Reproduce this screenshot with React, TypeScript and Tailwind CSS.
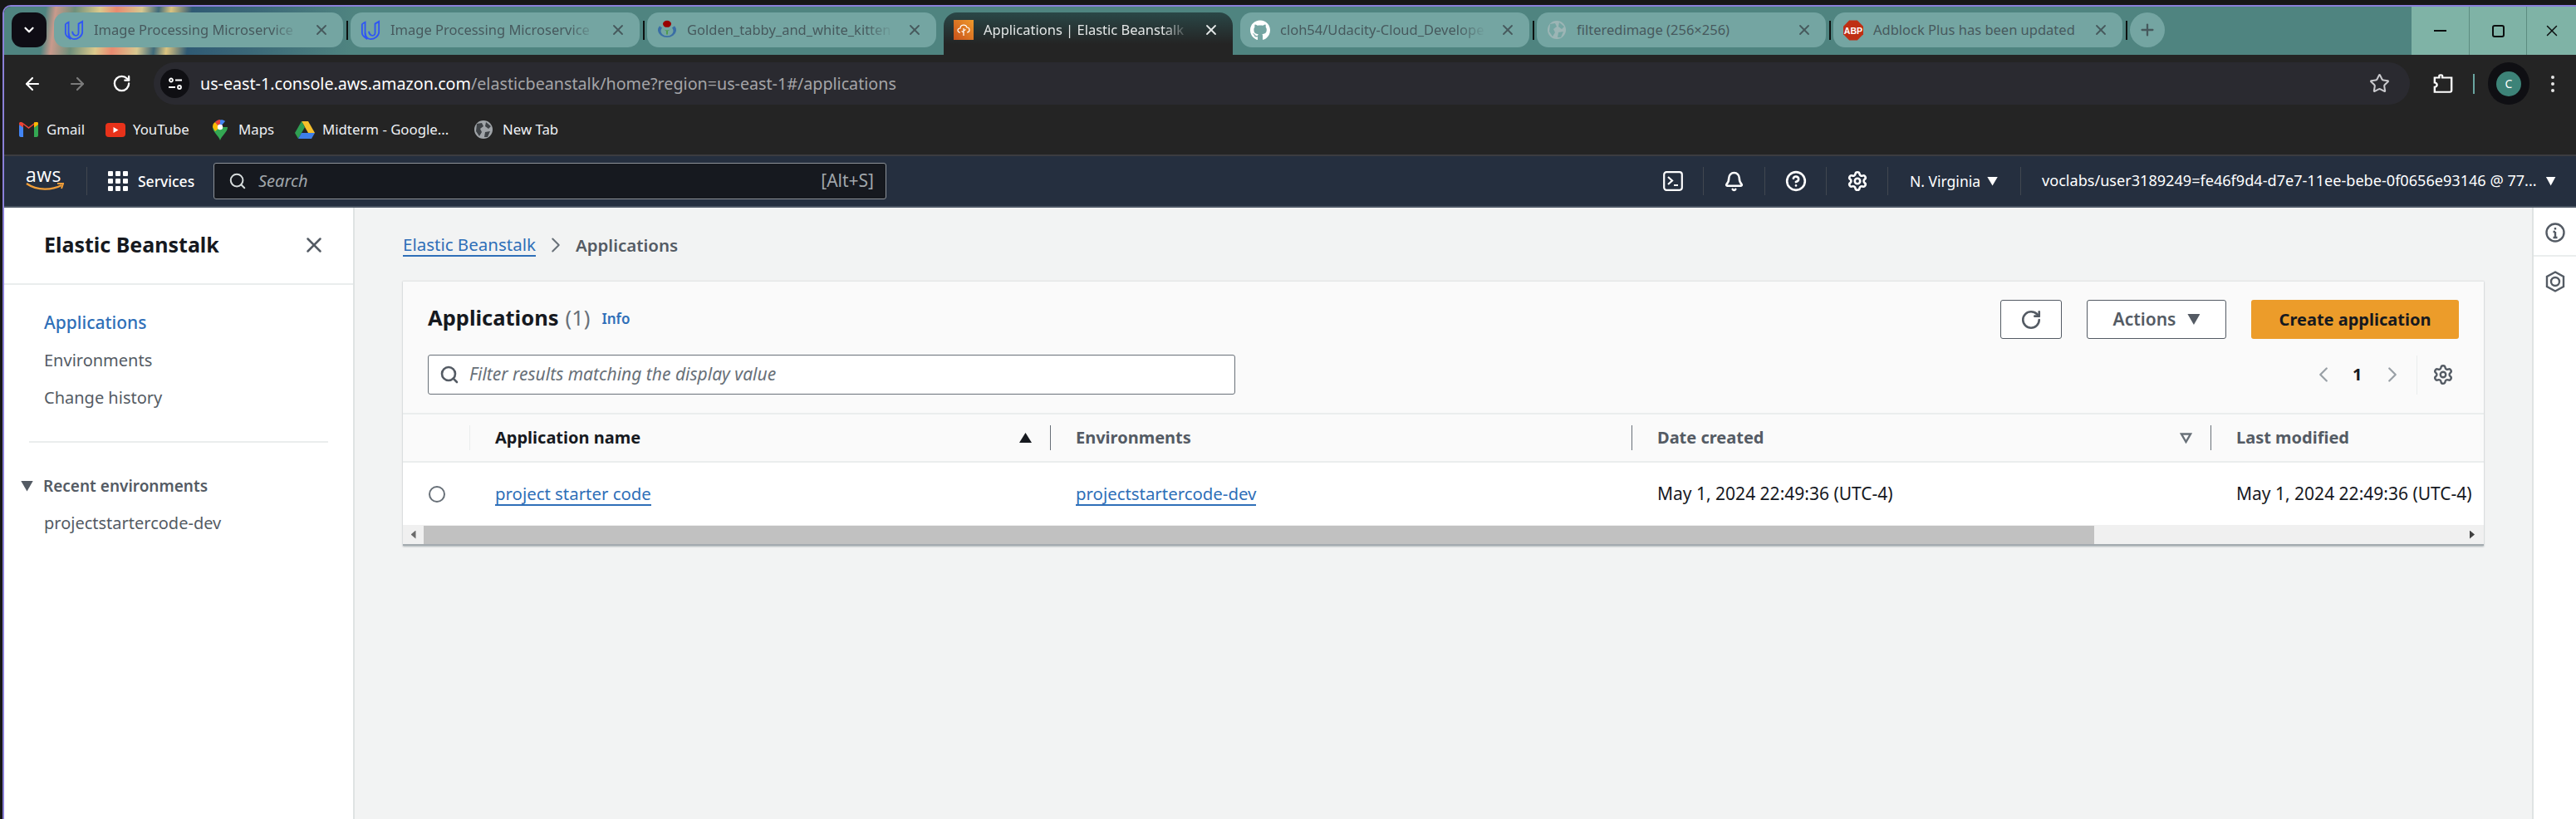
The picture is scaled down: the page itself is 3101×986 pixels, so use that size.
import {
  ArrowLeft,
  ArrowRight,
  Bell,
  ChevronDown,
  ChevronLeft,
  ChevronRight,
  CircleHelp,
  Plus,
  RotateCw,
  Search,
  Settings,
  Star,
  X,
} from "lucide-react";
import type { ReactNode } from "react";
import { FaGithub } from "react-icons/fa";

const UdacityIcon = () => (
  <svg width="26" height="26" viewBox="0 0 26 26" fill="none" stroke="#2f55f5" strokeWidth="2">
    <path d="M2 6 L2 17 C2 21 6 23 9 25 L9 25 C6 22 6 20 6 17 L6 3 C4 4 2 5 2 6Z" />
    <path d="M6 17 C6 21 9 25 13 25 C18 25 24 21 24 16 L24 2 L19 5 L19 17 C19 20 16 21 14 20 C11 19 11 17 11 15" />
  </svg>
);

const WikiIcon = () => (
  <svg width="24" height="24" viewBox="0 0 24 30" preserveAspectRatio="none">
    <circle cx="12" cy="6" r="5" fill="#990000" />
    <path d="M3 9 A11 11 0 1 0 21 9 L18 12 A7.5 7.5 0 1 1 6 12Z" fill="#3a6ea5" />
    <path d="M7 13 A6 6 0 0 0 17 13 L13 17 L13 22 L11 22 L11 17Z" fill="#4f9a50" />
  </svg>
);

const BeanstalkIcon = () => (
  <div className="w-6 h-6 bg-[linear-gradient(45deg,#c8511b,#ef9a2c)] flex items-center justify-center">
    <svg width="18" height="18" viewBox="0 0 18 18" fill="none" stroke="#fff" strokeWidth="1.2">
      <path d="M5 12 C1 12 1 7 5 7 C5 2 12 2 13 6 C17 6 17 12 13 12" />
      <path d="M9 16 L9 7 M9 10 L11.5 8.5 M9 12 L6.5 10.5" />
    </svg>
  </div>
);

const GlobeIcon = ({ bg, fg, size = 24 }: { bg: string; fg: string; size?: number }) => (
  <svg width={size} height={size} viewBox="0 0 24 24">
    <circle cx="12" cy="12" r="11" fill={bg} />
    <path d="M4 5 L10 4 L12 8 L8 11 L10 15 L7 20 L3 14Z M15 3 L21 8 L18 11 L14 8Z M14 15 L20 14 L17 21 L13 21Z" fill={fg} />
  </svg>
);

const AbpIcon = () => (
  <svg width="25" height="25" viewBox="0 0 25 25">
    <polygon points="7.5,0 17.5,0 25,7.5 25,17.5 17.5,25 7.5,25 0,17.5 0,7.5" fill="#bf2f14" />
    <text x="12.5" y="17" textAnchor="middle" fill="#fff" fontSize="11" fontWeight="700" fontFamily="Liberation Sans">
      ABP
    </text>
  </svg>
);

const GmailIcon = () => (
  <svg width="23" height="18" viewBox="0 0 23 18">
    <path d="M0 3 L5 6 L5 18 L2 18 C1 18 0 17 0 16Z" fill="#4285f4" />
    <path d="M23 3 L18 6 L18 18 L21 18 C22 18 23 17 23 16Z" fill="#34a853" />
    <path d="M0 2 C0 0 2 -1 4 0.5 L11.5 6 L19 0.5 C21 -1 23 0 23 2 L23 3 L18 6.5 L18 3 L11.5 8 L5 3 L5 6.5 L0 3Z" fill="#ea4335" />
    <path d="M18 0 L18 6.5 L23 3 L23 2 C23 0 21 -1 19 0.5Z" fill="#fbbc04" />
  </svg>
);

const YoutubeIcon = () => (
  <svg width="24" height="17" viewBox="0 0 24 17">
    <rect width="24" height="17" rx="4" fill="#e8321a" />
    <polygon points="9.5,5 9.5,12 15.5,8.5" fill="#fff" />
  </svg>
);

const MapsIcon = () => (
  <svg width="18" height="25" viewBox="0 0 18 25">
    <path d="M9 25 C7 19 0 15 0 9 L9 9Z" fill="#34a853" />
    <path d="M9 25 C11 19 18 15 18 9 L9 9Z" fill="#34a853" />
    <path d="M0 9 C0 6 1 4 3 3 L9 9 L3 14Z" fill="#fbbc04" />
    <path d="M3 3 C5 0 13 -1 15 2 L9 9Z" fill="#4285f4" />
    <path d="M3 3 C5 1 7 0 9 0 L9 5 L6 7Z" fill="#ea4335" />
    <circle cx="9" cy="9" r="3.2" fill="#fff" />
  </svg>
);

const DriveIcon = () => (
  <svg width="24" height="21" viewBox="0 0 24 21">
    <polygon points="8,0 16,0 24,14 16,14" fill="#f6c02c" />
    <polygon points="8,0 0,14 4,21 12,7" fill="#2f9e52" />
    <polygon points="8,14 24,14 20,21 4,21" fill="#3f7fe8" />
  </svg>
);

const Tab = ({
  icon,
  title,
  active,
  fade,
}: {
  icon: ReactNode;
  title: string;
  active?: boolean;
  fade?: boolean;
}) => (
  <div
    className={
      active
        ? "w-[348px] h-[51px] shrink-0 flex items-start rounded-t-[16px] pl-[12px] pt-[9px] bg-[linear-gradient(#2a4747,#242424_75%)]"
        : "w-[348px] h-[42px] shrink-0 flex items-start rounded-[14px] pl-[12px] pt-[9px] bg-[#74a5a2]"
    }
  >
    <div className="w-6 h-6 flex items-center justify-center shrink-0">{icon}</div>
    <div
      className={
        (active ? "text-[#e3e6e6] " : "text-[#47595d] ") +
        (fade ? "[mask-image:linear-gradient(90deg,#000_84%,transparent_97%)] " : "") +
        "ml-[12px] w-[256px] h-6 whitespace-nowrap text-[16.5px] leading-6"
      }
    >
      {title}
    </div>
    <X
      size={20}
      strokeWidth={2.2}
      className={active ? "ml-[8px] mt-[2px] text-[#e3e6e6] shrink-0" : "ml-[8px] mt-[2px] text-[#47595d] shrink-0"}
    />
  </div>
);

const TabGap = ({ line }: { line?: boolean }) => (
  <div className="w-[9px] h-[42px] shrink-0 flex items-center justify-center">
    {line && <div className="w-[2px] h-[23px] bg-[#0d1211]" />}
  </div>
);

const TabStrip = () => (
  <div className="h-[58px] flex items-start pt-[7px] pl-[9px] bg-[linear-gradient(97deg,#4f8480_0,#4f8480_50px,#c99a8c_62px,#6e8f7b_85px,#dcc98c_115px,#e88a70_135px,#d8c890_165px,#3f6a7a_185px,#dcc480_200px,#2f5a74_225px,#3b6878_300px,#4f8480_420px,#4f8480_100%)]">
    <div className="w-[42px] h-[42px] shrink-0 rounded-[13px] bg-[#0e0c14] flex items-center justify-center text-white mr-[9px]">
      <ChevronDown size={18} strokeWidth={3} />
    </div>
    <Tab fade icon={<UdacityIcon />} title="Image Processing Microservice" />
    <TabGap line />
    <Tab fade icon={<UdacityIcon />} title="Image Processing Microservice" />
    <TabGap line />
    <Tab fade icon={<WikiIcon />} title="Golden_tabby_and_white_kitten" />
    <TabGap />
    <Tab active fade icon={<BeanstalkIcon />} title="Applications | Elastic Beanstalk |" />
    <TabGap />
    <Tab fade icon={<FaGithub size={25} color="#ffffff" />} title="cloh54/Udacity-Cloud_Develope" />
    <TabGap line />
    <Tab icon={<GlobeIcon bg="#9cb5b5" fg="#74a5a2" />} title="filteredimage (256×256)" />
    <TabGap line />
    <Tab icon={<AbpIcon />} title="Adblock Plus has been updated" />
    <TabGap line />
    <div className="w-[42px] h-[42px] shrink-0 rounded-full bg-[#74a5a2] flex items-center justify-center text-[#47595d]">
      <Plus size={22} strokeWidth={2.5} />
    </div>
    <div className="ml-auto -mt-[7px] h-[58px] flex bg-[#7fb3a6] text-[#0b0f0f]">
      <div className="w-[69px] flex items-center justify-center">
        <div className="w-[15px] h-[2px] bg-[#0b0f0f]" />
      </div>
      <div className="w-[69px] border-l border-[#5c8c80] flex items-center justify-center">
        <div className="w-[15px] h-[15px] rounded-[3px] border-2 border-[#0b0f0f]" />
      </div>
      <div className="w-[60px] border-l border-[#5c8c80] flex items-center justify-center">
        <X size={22} strokeWidth={1.6} />
      </div>
    </div>
  </div>
);

const AddressBar = () => (
  <div className="h-[60px] bg-[#242424] flex items-center pt-[9px] text-white">
    <div className="w-[180px] shrink-0 flex items-center pl-[22px]">
      <ArrowLeft size={24} strokeWidth={2.2} />
      <ArrowRight size={24} strokeWidth={2.2} className="ml-[30px] text-[#7b7b7b]" />
      <RotateCw size={23} strokeWidth={2.4} className="ml-[30px]" />
    </div>
    <div className="w-[2716px] h-[51px] shrink-0 rounded-full bg-[#2a2a30] flex items-center pl-[8px]">
      <div className="w-[35px] h-[35px] rounded-full bg-[#0f0f13] flex items-center justify-center">
        <svg width="18" height="16" viewBox="0 0 18 16" fill="none" stroke="#fff" strokeWidth="1.8">
          <circle cx="4" cy="3.5" r="2" />
          <path d="M9 3.5 H17" />
          <circle cx="14" cy="12" r="2" />
          <path d="M1 12 H9" />
        </svg>
      </div>
      <div className="ml-[13px] text-[19.7px] whitespace-nowrap">
        <span className="text-white">us-east-1.console.aws.amazon.com</span>
        <span className="text-[#a5a5a8]">/elasticbeanstalk/home?region=us-east-1#/applications</span>
      </div>
      <Star size={25} strokeWidth={2} className="ml-auto mr-[24px] text-[#c8c8cc]" />
    </div>
    <div className="flex-1 flex items-center pl-[28px]">
      <svg width="24" height="24" viewBox="0 0 26 32" fill="none" stroke="#fff" strokeWidth="2.6" preserveAspectRatio="none">
        <path d="M2 6 H8 V3 C8 1 12 1 12 3 V6 H24 V26 C24 29 22 29 22 29 H2 V21 C6 21 6 14 2 14Z" />
      </svg>
      <div className="ml-[24px] w-[2px] h-[24px] bg-[#6aa5a0]" />
      <div className="ml-[16px] w-[50px] h-[51px] rounded-full bg-[#0f0f13] flex items-center justify-center">
        <div className="w-[30px] h-[30px] rounded-full bg-[#3d8378] flex items-center justify-center text-[14px] text-white">
          C
        </div>
      </div>
      <div className="ml-[26px] flex flex-col gap-[4px]">
        <div className="w-[4px] h-[4px] rounded-full bg-[#e5e5e5]" />
        <div className="w-[4px] h-[4px] rounded-full bg-[#e5e5e5]" />
        <div className="w-[4px] h-[4px] rounded-full bg-[#e5e5e5]" />
      </div>
    </div>
  </div>
);

const Bookmark = ({ icon, label, className }: { icon: ReactNode; label: string; className: string }) => (
  <div className={className}>
    {icon}
    <span>{label}</span>
  </div>
);

const BookmarksBar = () => (
  <div className="h-[60px] bg-[#242424] flex items-center pl-[18px] text-[16.8px] text-[#eef1f4] border-b-2 border-[#3c3c40] box-content">
    <Bookmark icon={<GmailIcon />} label="Gmail" className="w-[104px] flex items-center gap-[10px]" />
    <Bookmark icon={<YoutubeIcon />} label="YouTube" className="w-[129px] flex items-center gap-[9px]" />
    <Bookmark icon={<MapsIcon />} label="Maps" className="w-[99px] flex items-center gap-[13px]" />
    <Bookmark icon={<DriveIcon />} label="Midterm - Google..." className="w-[215px] flex items-center gap-[9px]" />
    <Bookmark icon={<GlobeIcon bg="#a0a4a8" fg="#3e4246" />} label="New Tab" className="flex items-center gap-[11px]" />
  </div>
);

const NavIconCell = ({ children }: { children: ReactNode }) => (
  <div className="w-[74px] h-[34px] border-r border-[#414750] flex items-center justify-center text-white">
    {children}
  </div>
);

const Triangle = ({ className }: { className: string }) => (
  <div className={className + " shrink-0 [clip-path:polygon(0_0,100%_0,50%_100%)]"} />
);

const AwsNav = () => (
  <div className="h-[60px] bg-[#252f3f] border-b-2 border-[#4b5563] box-content flex items-center text-white">
    <div className="w-[100px] h-[34px] shrink-0 border-r border-[#414750] pl-[26px] flex flex-col items-start justify-center">
      <div className="text-[23px] leading-[20px] font-['Open_Sans'] tracking-[0.5px] -mt-[6px]">aws</div>
      <svg width="46" height="11" viewBox="0 0 46 11" fill="none" className="-mt-[1px]">
        <path d="M1 2 C14 11 32 10 43 4" stroke="#f19e38" strokeWidth="2.4" />
        <path d="M38 2 L45 2 L43 8" stroke="#f19e38" strokeWidth="2" />
      </svg>
    </div>
    <div className="ml-[25px] grid grid-cols-3 gap-[3px] w-[24px] shrink-0">
      {[0, 1, 2, 3, 4, 5, 6, 7, 8].map((i) => (
        <div key={i} className="w-[6px] h-[6px] rounded-[1px] bg-white" />
      ))}
    </div>
    <div className="ml-[12px] w-[91px] text-[17.5px] font-medium whitespace-nowrap">Services</div>
    <div className="w-[810px] h-[44px] shrink-0 rounded-[3px] border border-[#8d9399] bg-[#16191f] flex items-center pl-[17px] pr-[14px]">
      <Search size={22} strokeWidth={2.2} className="text-[#d5dbdb]" />
      <span className="ml-[14px] italic text-[20px] text-[#a0a6ab]">Search</span>
      <span className="ml-auto text-[21px] text-[#a0a6ab]">[Alt+S]</span>
    </div>
    <div className="ml-auto flex items-center">
      <NavIconCell>
        <svg width="24" height="24" viewBox="0 0 24 24" fill="none" stroke="#fff" strokeWidth="2.2">
          <rect x="1.2" y="1.2" width="21.6" height="21.6" rx="3" />
          <path d="M6 7 L11 11.5 L6 16 M13 17 H18" />
        </svg>
      </NavIconCell>
      <NavIconCell>
        <Bell size={25} strokeWidth={2.4} />
      </NavIconCell>
      <NavIconCell>
        <CircleHelp size={26} strokeWidth={2.4} />
      </NavIconCell>
      <NavIconCell>
        <Settings size={26} strokeWidth={2.4} />
      </NavIconCell>
      <div className="w-[160px] h-[34px] border-r border-[#414750] flex items-center pl-[26px] gap-[8px] text-[17.5px] whitespace-nowrap">
        <span>N. Virginia</span>
        <Triangle className="w-[13px] h-[11px] bg-white" />
      </div>
      <div className="w-[668px] h-[34px] flex items-center pl-[25px] gap-[11px] text-[18.1px] whitespace-nowrap">
        <span>voclabs/user3189249=fe46f9d4-d7e7-11ee-bebe-0f0656e93146 @ 77...</span>
        <Triangle className="w-[12px] h-[11px] bg-white" />
      </div>
    </div>
  </div>
);

const SideNav = () => (
  <div className="w-[422px] shrink-0 bg-white border-r-2 border-[#dfe3e3] text-[20px] text-[#545b64]">
    <div className="h-[93px] border-b-2 border-[#eaeded] flex items-center pl-[48px] pr-[32px] justify-between">
      <span className="text-[25px] font-bold text-[#16191f] -mt-[2px]">Elastic Beanstalk</span>
      <X size={30} strokeWidth={2} className="text-[#545b64] -mt-[2px]" />
    </div>
    <div className="pt-[23px] pl-[48px]">
      <div className="h-[45px] flex items-center text-[21px] font-medium text-[#2f6fb8]">Applications</div>
      <div className="h-[45px] flex items-center">Environments</div>
      <div className="h-[45px] flex items-center">Change history</div>
    </div>
    <div className="mt-[30px] mx-[30px] h-[2px] bg-[#eaeded]" />
    <div className="mt-[40px] h-[24px] pl-[20px] flex items-center">
      <Triangle className="w-[15px] h-[13px] bg-[#545b64]" />
      <span className="ml-[12px] text-[19px] font-semibold">Recent environments</span>
    </div>
    <div className="mt-[20px] pl-[48px] leading-[26px]">projectstartercode-dev</div>
  </div>
);

const cols = "grid grid-cols-[80px_699px_700px_697px_1fr]";

const HeaderCell = ({
  label,
  dark,
  sort,
}: {
  label: string;
  dark?: boolean;
  sort?: ReactNode;
}) => (
  <div className="h-full flex items-center">
    <div className={dark ? "w-px h-[30px] bg-[#eaeded] shrink-0" : "w-px h-[30px] bg-[#687078] shrink-0"} />
    <div className={dark ? "pl-[30px] font-bold text-[#16191f]" : "pl-[30px] font-bold text-[#545b64]"}>{label}</div>
    {sort && <div className="ml-auto mr-[22px] flex">{sort}</div>}
  </div>
);

const ApplicationsCard = () => (
  <div className="mt-[28px] w-[2505px] bg-[#fafafa] border-t border-[#e3e6e6] border-b-2 border-b-[#a4abb0] shadow-[0_1px_2px_rgba(0,28,36,0.3)] text-[20px]">
    <div className="h-[160px] px-[30px] pt-[22px] border-b-2 border-[#eaeded]">
      <div className="h-[47px] flex items-center">
        <h1 className="text-[25.5px] font-bold text-[#16191f] -mt-[5px]">Applications</h1>
        <span className="ml-[8px] text-[25.5px] text-[#687078] -mt-[5px]">(1)</span>
        <span className="ml-[14px] -mt-[2px] text-[17px] font-semibold text-[#2f6fb8]">Info</span>
        <button className="ml-auto w-[74px] h-[47px] rounded-[3px] border border-[#545b64] bg-white flex items-center justify-center text-[#545b64]">
          <RotateCw size={26} strokeWidth={2.4} />
        </button>
        <button className="ml-[30px] w-[168px] h-[47px] rounded-[3px] border border-[#545b64] bg-white flex items-center justify-center gap-[14px] text-[21px] font-semibold text-[#545b64]">
          Actions
          <Triangle className="w-[15px] h-[13px] bg-[#545b64]" />
        </button>
        <button className="ml-[30px] w-[250px] h-[47px] rounded-[3px] bg-[#ec9c2a] font-bold text-[#16191f] whitespace-nowrap">
          Create application
        </button>
      </div>
      <div className="mt-[19px] h-[48px] flex items-center">
        <div className="w-[972px] h-[48px] rounded-[3px] border border-[#687078] bg-white flex items-center pl-[13px]">
          <Search size={24} strokeWidth={2.6} className="text-[#545b64]" />
          <span className="ml-[12px] italic text-[21px] text-[#687078]">Filter results matching the display value</span>
        </div>
        <div className="ml-auto flex items-center h-[48px]">
          <ChevronLeft size={30} strokeWidth={1.8} className="text-[#99a0a6]" />
          <span className="ml-[20px] w-[12px] font-bold text-[#16191f]">1</span>
          <ChevronRight size={30} strokeWidth={1.8} className="ml-[21px] text-[#99a0a6]" />
          <div className="ml-[14px] w-px h-[47px] bg-[#eaeded]" />
          <Settings size={26} strokeWidth={2.2} className="ml-[18px] mr-[6px] text-[#545b64]" />
        </div>
      </div>
    </div>
    <div className={cols + " h-[58px] border-b-2 border-[#eaeded]"}>
      <div />
      <HeaderCell label="Application name" dark sort={<Triangle className="w-[15px] h-[12px] bg-[#16191f] rotate-180" />} />
      <HeaderCell label="Environments" />
      <HeaderCell
        label="Date created"
        sort={
          <svg width="15" height="13" viewBox="0 0 15 13" fill="none" stroke="#687078" strokeWidth="2.4">
            <polygon points="2,1.5 13,1.5 7.5,11" />
          </svg>
        }
      />
      <HeaderCell label="Last modified" />
    </div>
    <div className={cols + " h-[75px] bg-white items-center text-[#16191f]"}>
      <div className="pl-[31px]">
        <div className="w-[20px] h-[20px] rounded-full border-2 border-[#687078]" />
      </div>
      <div className="pl-[31px] leading-[26px] text-[20.4px]">
        <span className="inline-block text-[#2f6fb8] border-b-2 border-[#2f6fb8]">project starter code</span>
      </div>
      <div className="pl-[31px] leading-[26px] text-[20.4px]">
        <span className="inline-block text-[#2f6fb8] border-b-2 border-[#2f6fb8]">projectstartercode-dev</span>
      </div>
      <div className="pl-[31px] text-[21px] whitespace-nowrap">May 1, 2024 22:49:36 (UTC-4)</div>
      <div className="pl-[31px] text-[21px] whitespace-nowrap">May 1, 2024 22:49:36 (UTC-4)</div>
    </div>
    <div className="h-[23px] bg-[#f0f0f0] flex items-center">
      <div className="w-[25px] flex justify-center">
        <div className="w-[6px] h-[10px] bg-[#6b6b6b] [clip-path:polygon(100%_0,100%_100%,0_50%)]" />
      </div>
      <div className="w-[2011px] h-[22px] bg-[#c1c1c1]" />
      <div className="ml-auto w-[28px] flex justify-center">
        <div className="w-[6px] h-[10px] bg-[#404040] [clip-path:polygon(0_0,0_100%,100%_50%)]" />
      </div>
    </div>
  </div>
);

const ToolsRail = () => (
  <div className="w-[53px] shrink-0 bg-white border-l-2 border-[#dfe3e3] text-[#545b64]">
    <div className="h-[59px] border-b-2 border-[#eaeded] flex items-center justify-center pt-[2px]">
      <svg width="24" height="24" viewBox="0 0 24 24" fill="none" stroke="currentColor" strokeWidth="2.4">
        <circle cx="12" cy="12" r="10.5" />
        <path d="M12 11 V18 M9.5 18 H14.5 M9.5 11 H12 M12 6 V8.5" />
      </svg>
    </div>
    <div className="h-[60px] flex items-center justify-center">
      <svg width="24" height="26" viewBox="0 0 24 26" fill="none" stroke="currentColor" strokeWidth="2.4">
        <path d="M12 1.5 L22 7 V19 L12 24.5 L2 19 V7Z" />
        <path d="M12 8 A5 5 0 1 1 12 18 A5 5 0 1 1 12 8Z" />
      </svg>
    </div>
  </div>
);

const App = () => (
  <div className="w-[3101px] h-[986px] overflow-hidden bg-[#171717] flex flex-col font-['Noto_Sans',sans-serif]">
    <div className="h-[6px] shrink-0" />
    <div className="ml-[3px] flex-1 flex flex-col min-h-0 border-t-2 border-l-2 border-[#8a80d8] rounded-tl-[10px] overflow-hidden">
      <TabStrip />
      <AddressBar />
      <BookmarksBar />
      <AwsNav />
      <div className="flex-1 flex min-h-0 bg-[#f2f3f3]">
        <SideNav />
        <div className="flex-1 pl-[58px]">
          <div className="pt-[29px] h-[60px] flex items-center text-[20.5px] leading-[26px]">
            <span className="text-[#2f6fb8] border-b-2 border-[#2f6fb8]">Elastic Beanstalk</span>
            <ChevronRight size={30} strokeWidth={1.6} className="mx-[9px] text-[#687078]" />
            <span className="font-semibold text-[#545b64]">Applications</span>
          </div>
          <ApplicationsCard />
        </div>
        <ToolsRail />
      </div>
    </div>
  </div>
);

export default App;
